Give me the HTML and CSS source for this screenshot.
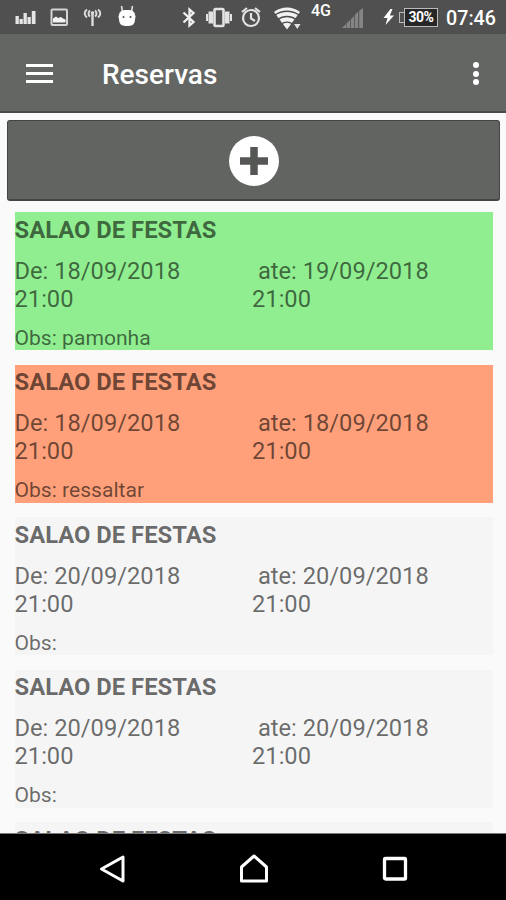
FILE: index.html
```html
<!DOCTYPE html>
<html lang="pt-BR">
<head>
    <meta charset="UTF-8">
    <meta name="viewport" content="width=device-width, initial-scale=1.0">
    <title>Reservas</title>
    <link rel="stylesheet" href="styles.css">
</head>
<body>
    <div class="status-bar">
        <div class="status-left">
            <svg width="22" height="34" viewBox="0 0 22 34" fill="#e6e6e6">
                <path d="M.5 16h3.300v8H.5zM4.500 19h3.300v5H4.500zM8.500 13h3.300v11H8.500zM12.500 17h3.300v7h-3.300zM16.800 11h3.700v13h-3.700z"/>
            </svg>
            <svg width="20" height="34" viewBox="0 0 20 34">
                <rect x="1.500" y="9.500" width="15.500" height="15.500" rx="1" fill="none" stroke="#d4d4d4" stroke-width="2"/>
                <path d="M3 22.500v-4l3-2 2 1.500 3-1 2 1.500 2.500 1v3z" fill="#f2f2f2"/>
            </svg>
            <svg width="20" height="34" viewBox="0 0 20 34" fill="none" stroke="#dcdcdc" stroke-width="2">
                <path d="M4 9.500c-3 2-3 6 0 8M15 9.500c3 2 3 6 0 8M7 10.500c-2 1.500-2 4.500 0 6M12 10.500c2 1.500 2 4.500 0 6"/>
                <path d="M9.500 14v12" stroke-width="2.400"/>
                <circle cx="9.500" cy="13" r="1.800" fill="#dcdcdc" stroke="none"/>
            </svg>
            <svg width="20" height="34" viewBox="0 0 20 34">
                <path d="M5.500 6l1 6M16.500 6l-1 6" stroke="#e0e0e0" stroke-width="1.600"/>
                <path d="M3.500 13c1-2.500 4-3 7.500-3s6.500.5 7.500 3l1 3.500-1 6c-1 2.500-3 3.500-7.500 3.500s-6.500-1-7.500-3.500l-1-6z" fill="#fff"/>
                <circle cx="7.500" cy="17" r="1" fill="#4b4c4b"/>
                <circle cx="14.500" cy="17" r="1" fill="#4b4c4b"/>
            </svg>
        </div>
        <div class="status-right">
            <svg class="bluetooth" width="14" height="34" viewBox="0 0 14 34" fill="none" stroke="#f0f0f0" stroke-width="2.300">
                <path d="M1.500 12.500l10 9.500L7.500 25.500v-16l4 3.500-10 9.500"/>
            </svg>
            <svg class="vibrate" width="28" height="34" viewBox="0 0 28 34" fill="#e2e2e2">
                <path d="M1 14h2v7H1zM3.500 11.500h4.500v12H3.500zM20 11.500h4.500v12H20zM25 14h2v7h-2z"/>
                <rect x="9.500" y="9" width="9" height="17" rx="1" fill="none" stroke="#e2e2e2" stroke-width="2.600"/>
            </svg>
            <svg class="alarm" width="20" height="34" viewBox="0 0 20 34" fill="none" stroke="#e2e2e2" stroke-width="2.200">
                <circle cx="10" cy="18" r="8"/>
                <path d="M1 12l5-4M19 12l-5-4M10 13v5.500l4 2.500"/>
            </svg>
            <svg class="wifi" width="29" height="34" viewBox="0 0 29 34">
                <path d="M1 12c7-6 19-6 26 0L14 29.500z" fill="#f2f2f2"/>
                <path d="M2 15c7-5 17-5 24 0M5 19.500c5-4 13-4 18 0M8.500 24c3-2.500 8-2.500 11 0" fill="none" stroke="#4b4c4b" stroke-width="1.300"/>
                <path d="M20 22h9v8h-9z" fill="#4f504f"/>
                <path d="M21 24h6.500L24.300 29z" fill="#e2e2e2"/>
            </svg>
            <span class="network">4G</span>
            <svg class="signal" width="22" height="34" viewBox="0 0 22 34" fill="#858585">
                <path d="M0 28l4-4v4zM4.500 23.500l3.500-3.500v8H4.500zM8.800 19.500l3.200-3.500v12H8.800zM12.800 15l3.400-3.500V28h-3.400zM17.200 11L21 8v20h-3.800z"/>
            </svg>
            <svg class="bolt" width="12" height="34" viewBox="0 0 12 34">
                <path d="M7.500 9L.5 18h4L2.500 25l8.500-9.500H6.800L9.500 9z" fill="#fff"/>
            </svg>
            <div class="battery"><span>30%</span></div>
            <span class="clock">07:46</span>
        </div>
    </div>

    <header class="toolbar">
        <div class="menu-icon"><i></i><i></i><i></i></div>
        <h1>Reservas</h1>
        <div class="more-icon"><i></i><i></i><i></i></div>
    </header>

    <main class="content">
        <button class="add-button" type="button" aria-label="Adicionar">
            <svg width="52" height="52" viewBox="0 0 52 52">
                <circle cx="26" cy="26" r="25" fill="#fff"/>
                <path d="M26 12v28M12 26h28" stroke="#555755" stroke-width="7.500"/>
            </svg>
        </button>

        <div class="reservas">
            <div class="reserva confirmada">
                <h2>SALAO DE FESTAS</h2>
                <div class="datas">
                    <p>De: 18/09/2018<br>21:00</p>
                    <p>&nbsp;ate: 19/09/2018<br>21:00</p>
                </div>
                <p class="obs">Obs: pamonha</p>
            </div>
            <div class="reserva recusada">
                <h2>SALAO DE FESTAS</h2>
                <div class="datas">
                    <p>De: 18/09/2018<br>21:00</p>
                    <p>&nbsp;ate: 18/09/2018<br>21:00</p>
                </div>
                <p class="obs">Obs: ressaltar</p>
            </div>
            <div class="reserva">
                <h2>SALAO DE FESTAS</h2>
                <div class="datas">
                    <p>De: 20/09/2018<br>21:00</p>
                    <p>&nbsp;ate: 20/09/2018<br>21:00</p>
                </div>
                <p class="obs">Obs:</p>
            </div>
            <div class="reserva">
                <h2>SALAO DE FESTAS</h2>
                <div class="datas">
                    <p>De: 20/09/2018<br>21:00</p>
                    <p>&nbsp;ate: 20/09/2018<br>21:00</p>
                </div>
                <p class="obs">Obs:</p>
            </div>
            <div class="reserva">
                <h2>SALAO DE FESTAS</h2>
            </div>
        </div>
    </main>

    <nav class="nav-bar">
        <svg width="28" height="30" viewBox="0 0 28 30" fill="none" stroke="#fff" stroke-width="3">
            <path d="M24 3v24L2.500 15z" stroke-linejoin="round"/>
        </svg>
        <svg width="30" height="30" viewBox="0 0 30 30" fill="none" stroke="#fff" stroke-width="3">
            <path d="M2.500 13L15 2l12.500 11v14h-25z" stroke-linejoin="round"/>
        </svg>
        <svg width="28" height="30" viewBox="0 0 28 30" fill="none" stroke="#fff" stroke-width="3.300">
            <rect x="3.500" y="4.500" width="21" height="20.500" rx="1"/>
        </svg>
    </nav>
</body>
</html>
```
FILE: styles.css
```css
* {
    box-sizing: border-box;
}
body {
    margin: 0;
    height: 900px;
    display: flex;
    flex-direction: column;
    overflow: hidden;
    background-color: #fafafa;
    font-family: Roboto, sans-serif;
}
h1, h2, p {
    margin: 0;
}
svg {
    display: block;
    flex: none;
}

/* Barra de estado */
.status-bar {
    display: flex;
    justify-content: space-between;
    height: 34px;
    flex: none;
    padding: 0 10px 0 15px;
    background-color: #4f504f;
    color: #fff;
}
.status-left {
    display: flex;
    gap: 13px;
}
.status-right {
    display: flex;
    align-items: center;
}
.vibrate {
    margin-left: 9px;
}
.alarm {
    margin-left: 8px;
}
.wifi {
    margin-left: 12px;
}
.network {
    width: 20px;
    margin: 0 0 12px 9px;
    font-size: 16px;
    font-weight: 500;
    line-height: 20px;
    white-space: nowrap;
}
.signal {
    margin-left: 11px;
}
.bolt {
    margin-left: 19px;
}
.battery {
    display: flex;
    align-items: center;
    width: 39px;
    margin-left: 4px;
}
.battery::before {
    content: "";
    width: 4px;
    height: 9px;
    border: 1px solid #bbb;
    border-right: 0;
}
.battery span {
    flex: 1;
    height: 19px;
    border: 1px solid #bbb;
    background-color: #262626;
    font-size: 14px;
    font-weight: 700;
    line-height: 17px;
    text-align: center;
    letter-spacing: -0.5px;
}
.clock {
    width: 50px;
    margin-left: 8px;
    padding-top: 3px;
    font-size: 19.700px;
    font-weight: 500;
    line-height: 24px;
    white-space: nowrap;
}

/* Cabecera */
.toolbar {
    display: flex;
    align-items: center;
    height: 79px;
    flex: none;
    padding: 0 26px;
    background-color: #646664;
    border-bottom: 2px solid #4a4b4a;
    color: #fff;
}
.menu-icon {
    display: flex;
    flex-direction: column;
    gap: 5px;
    width: 27px;
    padding-top: 2px;
}
.menu-icon i {
    height: 3px;
    background-color: #fff;
}
.toolbar h1 {
    flex: 1;
    margin-left: 49px;
    padding-top: 5px;
    font-size: 28px;
    font-weight: 500;
    line-height: 32px;
}
.more-icon {
    display: flex;
    flex-direction: column;
    gap: 2.500px;
    margin-right: 1px;
    padding-top: 2px;
}
.more-icon i {
    width: 6px;
    height: 6px;
    border-radius: 50%;
    background-color: #fff;
}

/* Lista de reservas */
.content {
    flex: 1;
    min-height: 0;
    overflow: hidden;
    padding: 7px 6px 0 7px;
}
.add-button {
    display: flex;
    align-items: center;
    justify-content: center;
    width: 100%;
    height: 81px;
    padding: 1px 0 0;
    background-color: #626462;
    border: 1px solid #434443;
    border-bottom-width: 2px;
    border-radius: 3px;
}
.reservas {
    display: flex;
    flex-direction: column;
    gap: 14.600px;
    padding: 11px 7.500px 0;
}
.reserva {
    height: 138px;
    background-color: #f5f5f5;
    color: rgba(0, 0, 0, 0.58);
}
.confirmada {
    background-color: #90ee90;
}
.recusada {
    background-color: #ffa07a;
}
.reserva h2 {
    padding-top: 3.500px;
    font-size: 23.800px;
    font-weight: 700;
    line-height: 28px;
}
.datas {
    display: grid;
    grid-template-columns: 237.500px 1fr;
    padding-top: 13px;
    font-size: 23.700px;
    line-height: 28px;
}
.obs {
    padding-top: 12px;
    font-size: 21.100px;
    line-height: 26px;
}

/* Barra de navegacion */
.nav-bar {
    display: flex;
    align-items: center;
    justify-content: center;
    gap: 112px;
    height: 67px;
    flex: none;
    padding: 4px 0 0 1px;
    background-color: #000;
    border-top: 1px solid #777;
}
```
